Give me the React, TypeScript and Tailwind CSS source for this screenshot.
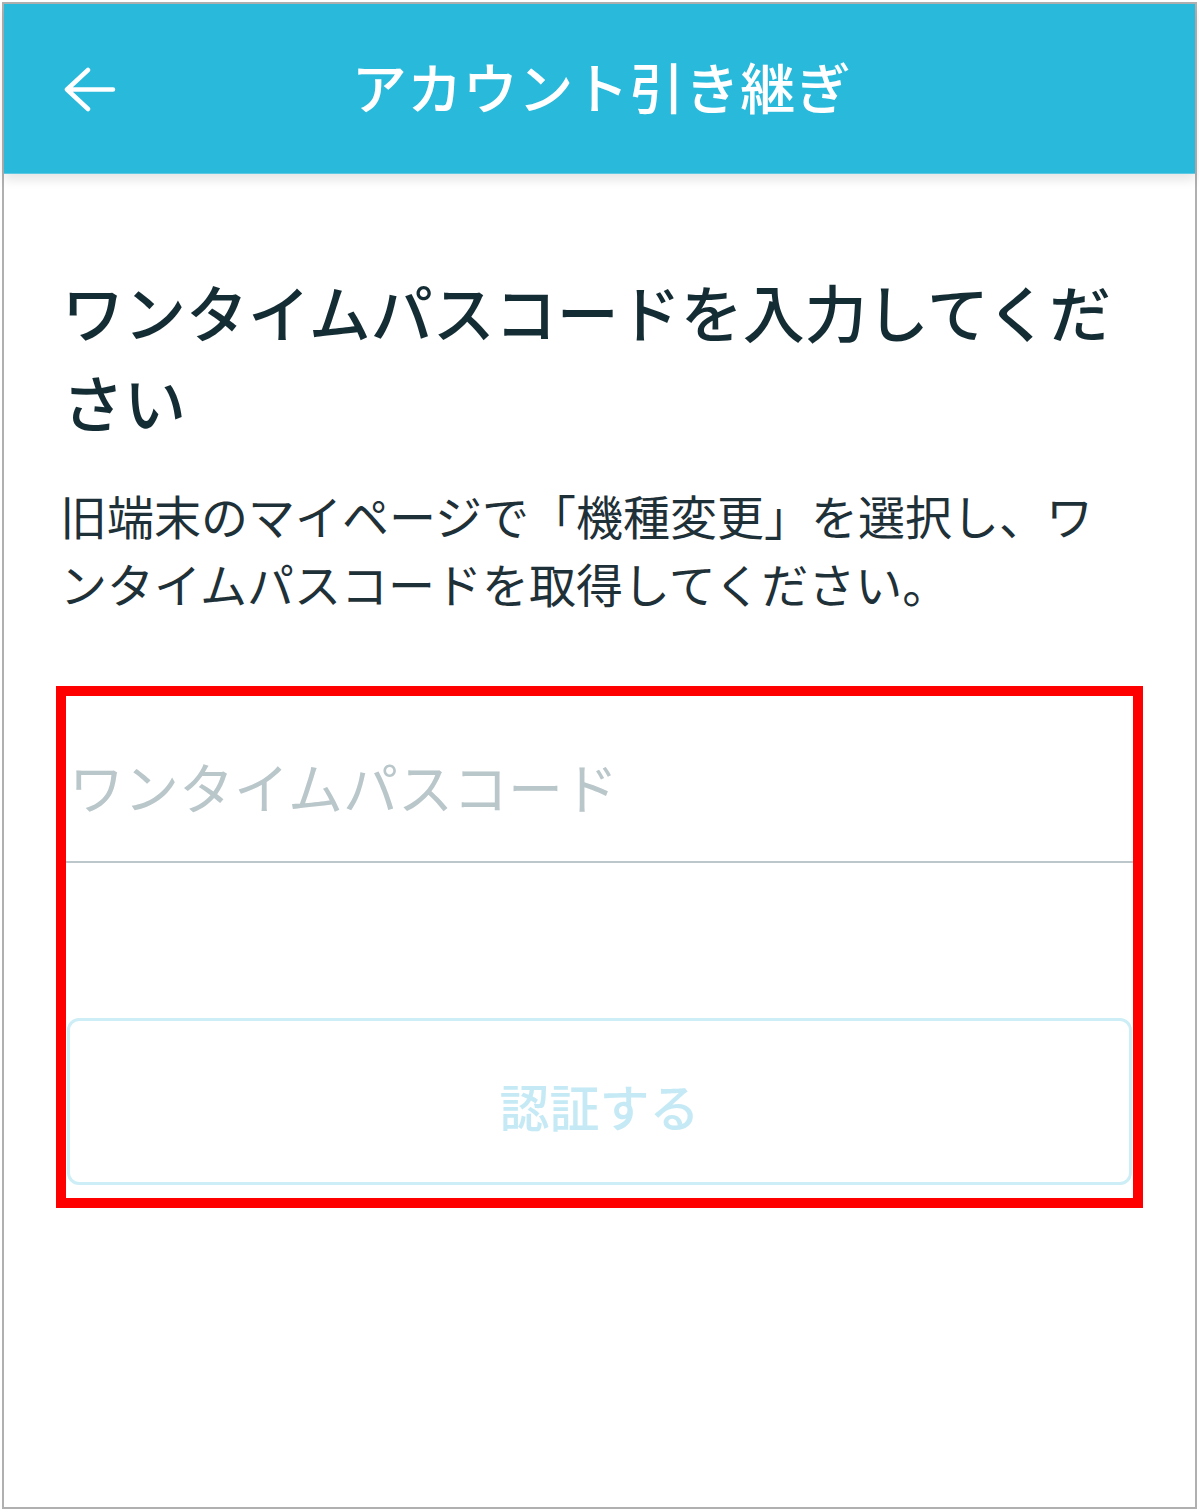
const font = { fontFamily: '"Noto Sans CJK JP", "Noto Sans", sans-serif' };

function BackArrow() {
  return (
    <svg width="52" height="46" viewBox="0 0 52 46" fill="none">
      <path
        d="M3 22.5 H49 M24 3 L3 22.5 L24 42"
        stroke="#ffffff"
        strokeWidth="4.5"
        strokeLinecap="round"
        strokeLinejoin="round"
      />
    </svg>
  );
}

export default function App() {
  return (
    <div className="w-[1199px] h-[1511px] bg-white p-[2px]" style={font}>
      <div className="h-full border-2 border-[#b0b0b0] flex flex-col">
        {/* header */}
        <header className="h-[170px] shrink-0 bg-[#29b9db] border-b border-[#5ec9e3] shadow-[0_6px_10px_rgba(0,0,0,0.10)] grid grid-cols-[1fr_auto_1fr] items-center">
          <button className="justify-self-start ml-[60px] mt-[2px]">
            <BackArrow />
          </button>
          <h1 className="text-[55px] leading-none font-medium text-white tracking-[0.5px] ml-[4px] mb-[6px]">
            アカウント引き継ぎ
          </h1>
          <div />
        </header>

        {/* body */}
        <main className="px-[56px] pt-[92px]">
          <h2 className="text-[62px] leading-[90px] font-medium text-[#142c34] pl-[2px]">
            ワンタイムパスコードを入力してください
          </h2>
          <p className="mt-[35px] text-[47px] leading-[68px] text-[#1f3138]">
            旧端末のマイページで「機種変更」を選択し、ワ
            <br />
            ンタイムパスコードを取得してください。
          </p>

          <div className="mt-[69px] mx-[-4px] border-[10px] border-[#ff0000]">
            <input
              type="text"
              placeholder="ワンタイムパスコード"
              className="block w-full pt-[56px] pb-[43px] pl-[3px] text-[55px] leading-[66px] text-[#142c34] placeholder:text-[#b9c6ca] border-b-2 border-[#bcc7cb] outline-none bg-white"
              style={font}
            />
            <button
              disabled
              className="mt-[155px] mb-[13px] mx-[1px] w-[calc(100%-2px)] h-[167px] rounded-[12px] border-[3px] border-[#cdeef6] bg-white flex items-center justify-center pt-[8px] text-[50px] font-medium text-[#c6eaf5]"
            >
              認証する
            </button>
          </div>
        </main>
      </div>
    </div>
  );
}
